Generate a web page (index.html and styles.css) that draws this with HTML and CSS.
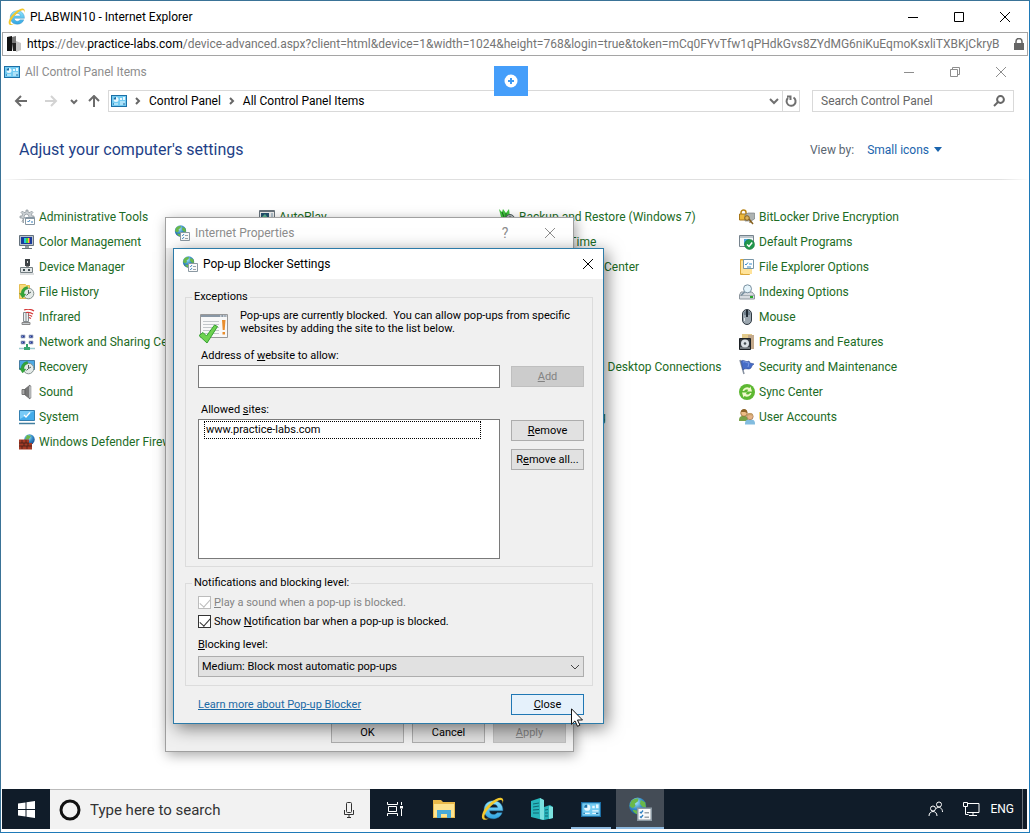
FILE: index.html
```html
<!DOCTYPE html>
<html lang="en">
  <head>
    <meta charset="utf-8">
    <title>PLABWIN10 - Internet Explorer</title>
    <link rel="stylesheet" href="styles.css">
  </head>
  <body>
    <!-- icons used more than once -->
    <svg class="sprites" aria-hidden="true">
      <defs>
        <radialGradient id="globeFill" cx="0.4" cy="0.3" r="0.8">
          <stop offset="0" stop-color="#a8e4f8"/>
          <stop offset="0.5" stop-color="#3289c4"/>
          <stop offset="1" stop-color="#173d83"/>
        </radialGradient>
        <linearGradient id="ieFill" x1="0" y1="0" x2="0" y2="1">
          <stop offset="0" stop-color="#8fe4fc"/>
          <stop offset="1" stop-color="#2fa4e2"/>
        </linearGradient>
      </defs>
      <symbol id="ie" viewBox="0 0 16 16">
        <path d="M14.600 9.200H5.600c.1 1.600 1.200 2.500 2.700 2.500 1.100 0 1.900-.4 2.400-1.200h3.400c-.9 2.500-3.100 4-5.900 4C4.600 14.500 2 12 2 8.500S4.600 2.500 8.200 2.500c3.900 0 6.600 2.700 6.400 6.700zM5.700 7h5.400c-.2-1.300-1.200-2.100-2.700-2.100S6 5.700 5.700 7z" fill="url(#ieFill)" stroke="#2c80b4" stroke-width=".3"/>
        <path d="M14.200 4.600c1-2 .9-3.600-.6-4C10.500-.1 3.300 5.300 1.200 10.300c-1.100 2.700-.7 4.700 1 4.900 1 .1 2.100-.4 3.100-1.100-3.500 1.200-3.800-1-1.800-4.200C5.900 6.200 10 2.600 12.700 2c1.500-.4 2 .8 1.500 2.600z" fill="#f2c82e"/>
      </symbol>
      <symbol id="cpanel" viewBox="0 0 16 12">
        <path d="M0 0h16v12H0z" fill="#1c6fa6"/>
        <path d="M1 1h14v10H1z" fill="#72cbf2"/>
        <circle cx="5" cy="4.500" r="2.500" fill="#e8f8ff"/>
        <path d="M5 4.500V2a2.500 2.500 0 0 0-2.500 2.500z" fill="#1c6fa6"/>
        <path d="M9 3h2v2H9zM12 2h2v3h-2z" fill="#e8f8ff"/>
        <path d="M3 9h4M9 7h5M9 9h5" stroke="#e8f8ff"/>
        <path d="M2 9h1M12 9h2" stroke="#20689c"/>
      </symbol>
      <symbol id="globe" viewBox="0 0 16 16">
        <circle cx="6.500" cy="6" r="5.700" fill="url(#globeFill)"/>
        <path d="M2 3C3.500 1.300 5.500.8 7 1.200L6.500 3 4.500 4.500 5 6 3 7.500 1 6zM8.500 2l3 1.500L12 7 9.500 6.500 8 4.500zM3 8.500l3 .5v2.500C4.500 11 3.500 10 3 8.500z" fill="#6ab84a"/>
        <path d="M6.500 7.500h9v8h-9z" fill="#fafafa" stroke="#8b98a2"/>
        <path d="M8 10l.7.700L10 9M8 13l.7.700L10 12" fill="none" stroke="#2d7fc0" stroke-width=".9"/>
        <path d="M11 10.500h3M11 13.500h3" stroke="#9aa4ac"/>
      </symbol>
      <symbol id="clockBadge" viewBox="0 0 16 16">
        <circle cx="9.500" cy="9.500" r="5.300" fill="#e4eae8" stroke="#84928f"/>
        <path d="M9.500 6v3.500L12 8M9.500 9.500l-2 2" fill="none" stroke="#52605d"/>
        <path d="M8.500 2.500C4.500 3 2 6 2.200 9.500L.500 9.300 3.600 14 7 10.200 5 10C4.800 7.300 6 5.500 8.700 5z" fill="#32a43a" stroke="#198023" stroke-width=".3"/>
      </symbol>
      <symbol id="plain" viewBox="0 0 16 16">
        <path d="M1.500 2.500h13v11h-13z" fill="#d9edf8" stroke="#5d86a3"/>
        <path d="M2 4.500h12" stroke="#5d86a3"/>
      </symbol>
    </svg>

    <div class="browser">
      <header class="browserTitle">
        <svg class="icon18"><use href="#ie"/></svg>
        <span class="browserName">PLABWIN10 - Internet Explorer</span>
        <div class="captionButtons">
          <button aria-label="Minimize"><svg viewBox="0 0 12 12"><path d="M1 6.500h10" /></svg></button>
          <button aria-label="Maximize"><svg viewBox="0 0 12 12"><path d="M1.500 1.500h9v9h-9z"/></svg></button>
          <button aria-label="Close"><svg viewBox="0 0 12 12"><path d="M1 1l10 10M11 1L1 11"/></svg></button>
        </div>
      </header>

      <div class="urlBar">
        <svg class="siteIcon" viewBox="0 0 14 16"><path d="M0 1l5-1v15H0z" fill="#111"/><path d="M5 1l4-1v7H5z" fill="#777"/><path d="M5 7h4v8H6z" fill="#222"/><path d="M9 5l5 2v7l-5 2z" fill="#c4c4c4"/></svg>
        <div class="url"><b>https</b>://dev.<b>practice-labs.com</b>/device-advanced.aspx?client=html&amp;device=1&amp;width=1024&amp;height=768&amp;login=true&amp;token=mCq0FYvTfw1qPHdkGvs8ZYdMG6niKuEqmoKsxliTXBKjCkryB</div>
        <svg class="lock" viewBox="0 0 10 13"><path d="M0 5h10v7H0z" fill="#666"/><path d="M2 6V3.500a3 3 0 0 1 6 0V6" fill="none" stroke="#666" stroke-width="1.500"/></svg>
      </div>

      <main class="desktop">
        <header class="panelTitle">
          <svg class="cpIcon"><use href="#cpanel"/></svg>
          <span>All Control Panel Items</span>
          <div class="captionButtons">
            <button aria-label="Minimize panel"><svg viewBox="0 0 12 12"><path d="M1 6.500h10"/></svg></button>
            <button aria-label="Restore panel"><svg viewBox="0 0 12 12"><path d="M1.500 3.500h7v7h-7zM3.500 3.500v-2h7v7h-2"/></svg></button>
            <button aria-label="Close panel"><svg viewBox="0 0 12 12"><path d="M1 1l10 10M11 1L1 11"/></svg></button>
          </div>
        </header>

        <nav class="navRow">
          <button class="navBack" aria-label="Back"><svg viewBox="0 0 14 12"><path d="M13 6H2M7 1L2 6l5 5"/></svg></button>
          <button class="navForward" aria-label="Forward"><svg viewBox="0 0 14 12"><path d="M1 6h11M7 1l5 5-5 5"/></svg></button>
          <button class="navRecent" aria-label="Recent locations"><svg viewBox="0 0 14 12"><path d="M4 5l3 3 3-3"/></svg></button>
          <button class="navUp" aria-label="Up"><svg viewBox="0 0 14 12"><path d="M7 12V1M2 6l5-5 5 5"/></svg></button>
          <div class="crumbs">
            <svg class="cpIcon"><use href="#cpanel"/></svg>
            <svg class="crumbArrow" viewBox="0 0 6 8"><path d="M1 1l3 3-3 3"/></svg>
            <a href="#">Control Panel</a>
            <svg class="crumbArrow" viewBox="0 0 6 8"><path d="M1 1l3 3-3 3"/></svg>
            <a href="#">All Control Panel Items</a>
            <button class="crumbDrop" aria-label="Previous locations"><svg viewBox="0 0 10 8"><path d="M1 2l4 4 4-4"/></svg></button>
            <button class="crumbRefresh" aria-label="Refresh"><svg viewBox="0 0 12 12"><path d="M8.500 2.500A4.500 4.500 0 1 1 3 3M2 1.500h3.500V5"/></svg></button>
          </div>
          <div class="searchBox">
            <input type="text" placeholder="Search Control Panel" aria-label="Search Control Panel">
            <svg viewBox="0 0 12 12"><circle cx="7.500" cy="4.500" r="3.400"/><path d="M5 7l-4 4"/></svg>
          </div>
        </nav>

        <div class="settingsHead">
          <h1>Adjust your computer's settings</h1>
          <div class="viewBy">
            <span>View by:</span>
            <button>Small icons <svg viewBox="0 0 8 5"><path d="M0 0h8L4 5z"/></svg></button>
          </div>
        </div>

        <div class="itemsGrid">
          <a href="#"><svg viewBox="0 0 16 16"><path d="M7 1h2v2l2 .600L12.500 2 14 3.500 12.500 5l.5 2H15v2H4.500v5L3 12.500l1-2L3 9H1V7h2l.500-2L2 3.500 3.500 2 5 3.600 7 3z" fill="#c9ced2" stroke="#8a9298" stroke-width=".7"/><circle cx="7.500" cy="7.500" r="2.300" fill="#fff" stroke="#8a9298" stroke-width=".7"/><path d="M6.500 8.500h9v7h-9z" fill="#fff" stroke="#8796a2"/><path d="M7 9.500h8.500" stroke="#8796a2"/><path d="M8.500 12l1 1 1.500-2M12 13h2" fill="none" stroke="#3580bd"/></svg>Administrative Tools</a>
          <a href="#"><svg viewBox="0 0 16 16"><path d="M.500 1.500h15v12H.500z" fill="#eee" stroke="#68737c"/><path d="M1 2.500h14" stroke="#68737c"/><path d="M2 4h8v7H2z" fill="#23506f"/><path d="M3 8l3-3 3 4v2H3z" fill="#5bb48f"/><path d="M12 5h2M12 7h2M12 9h2" stroke="#7695aa"/></svg>AutoPlay</a>
          <a href="#"><svg viewBox="0 0 16 16"><path d="M0 0l3 3 1-3 3 4 3-4 1 8H2z" fill="#41c23e"/><path d="M3 3l2 5M7 4v4" stroke="#187020"/><circle cx="11" cy="10" r="4.500" fill="#b0b8b8" stroke="#4d5a5c"/><path d="M11 7v3l2 1" fill="none" stroke="#444"/></svg>Backup and Restore (Windows 7)</a>
          <a href="#"><svg viewBox="0 0 16 16"><path d="M2 5V3.500a2.500 2.500 0 0 1 5 0V5" fill="none" stroke="#b88518" stroke-width="1.500"/><path d="M.500 5h8v6h-8z" fill="#edb93b" stroke="#a87718"/><path d="M6 6l3-2h6.500v6L12 12H6z" fill="#aeb3b2" stroke="#6c7475" stroke-width=".6"/><circle cx="8" cy="9" r="2.300" fill="#ddb358" stroke="#855f1d"/><path d="M10 10l4 5M12 12.500l-1.500 1" stroke="#855f1d" stroke-width="1.500"/></svg>BitLocker Drive Encryption</a>

          <a href="#"><svg viewBox="0 0 16 16"><path d="M.500 1.500h14v10H.500z" fill="#bac4cb" stroke="#65727d"/><path d="M2 3h11v7H2z" fill="#193a9b"/><path d="M5 4h2v5H5z" fill="#28c8dd"/><path d="M7 4h2v5H7z" fill="#46d643"/><path d="M9 4h1v5H9z" fill="#f3d536"/><path d="M10 4h1v5h-1z" fill="#d83c78"/><path d="M6 12h4v2H6z" fill="#90999e"/><path d="M3 14.500h10" stroke="#687379"/></svg>Color Management</a>
          <a href="#"><svg><use href="#plain"/></svg>Credential Manager</a>
          <a href="#"><svg><use href="#plain"/></svg>Date and Time</a>
          <a href="#"><svg viewBox="0 0 16 16"><path d="M.500 1.500h14v11H.500z" fill="#f5f9fb" stroke="#76838d"/><path d="M1 3h13" stroke="#8996a0"/><path d="M5 5h6l-4 6H5z" fill="#49a3da"/><circle cx="10.500" cy="10.500" r="5" fill="#21974b" stroke="#107137" stroke-width=".5"/><path d="M8 10.500l2 2 3.200-4" fill="none" stroke="#fff" stroke-width="1.500"/></svg>Default Programs</a>

          <a href="#"><svg viewBox="0 0 16 16"><path d="M6 0h5v7H6z" fill="#3e4346"/><path d="M8 2h1v2H8z" fill="#ddd"/><path d="M7 7h3v2H7z" fill="#888"/><path d="M1.500 8.500h12v5h-12z" fill="#e1e5e6" stroke="#737e82"/><path d="M4 10h2v2H4zM9 10h2v2H9z" fill="#3f4b50"/><path d="M1 15h14" stroke="#b8bdc0"/></svg>Device Manager</a>
          <a href="#"><svg><use href="#plain"/></svg>Devices and Printers</a>
          <a href="#"><svg><use href="#plain"/></svg>Ease of Access Center</a>
          <a href="#"><svg viewBox="0 0 16 16"><path d="M1.500.500h9v15h-9z" fill="#f5cf68" stroke="#dba83c"/><path d="M2 2h2v12H2zM4 10h9v5H4z" fill="#ffe39a"/><path d="M4.500.500h10v9h-10z" fill="#fff" stroke="#7795a6"/><path d="M6 5l1 1 2-2.500M10 5h3M8 8h4" fill="none" stroke="#3d8dca"/></svg>File Explorer Options</a>

          <a href="#"><svg viewBox="0 0 16 16"><path d="M.500.500h6l1 1h3v13H.500z" fill="#f8dc7a" stroke="#e5bd50"/><use href="#clockBadge"/></svg>File History</a>
          <a href="#"><svg><use href="#plain"/></svg>Flash Player</a>
          <a href="#"><svg><use href="#plain"/></svg>Fonts</a>
          <a href="#"><svg viewBox="0 0 16 16"><path d="M2 8h11l2.500 3v4H.500v-4z" fill="#d7dbe0" stroke="#8d969e"/><path d="M1 11.500h14" stroke="#a7afb5"/><path d="M11 13h3" stroke="#2aa62c" stroke-width="2"/><circle cx="8.500" cy="4.800" r="4" fill="#e5f4fb" stroke="#7b91a0"/><path d="M5.500 8L2 11.500" stroke="#7b91a0" stroke-width="1.700"/></svg>Indexing Options</a>

          <a href="#"><svg viewBox="0 0 16 16"><path d="M4.500 3.500h5v9h-5z" fill="#eceff0" stroke="#848c90"/><path d="M7 4v8" stroke="#878f92"/><path d="M3 13.500h8v2H3z" fill="#c8cdd0" stroke="#888"/><path d="M5 1c3-1 7-1 10 1M7 3.500c3-.500 5 0 7 1.500M9 6c2 0 3 .500 4 1.500M10 8.500l2 1" fill="none" stroke="#d53b3b" stroke-width="1.200"/></svg>Infrared</a>
          <a href="#"><svg><use href="#plain"/></svg>Internet Options</a>
          <a href="#"><svg><use href="#plain"/></svg>Keyboard</a>
          <a href="#"><svg viewBox="0 0 16 16"><rect x="3.500" y=".5" width="9" height="15" rx="4.500" fill="#9ba6af" stroke="#303a43"/><path d="M5 3c1-1.500 5-1.500 6 0v3H5z" fill="#6f7f8c"/><path d="M8 1v7" stroke="#202a33" stroke-width="2"/><path d="M5.500 9v3" stroke="#e0e5e8"/></svg>Mouse</a>

          <a href="#"><svg viewBox="0 0 16 16"><path d="M2 1h4v3H2zM10 1h4v3h-4zM2 7h4v3H2zM10 7h4v3h-4z" fill="#26368c" stroke="#a9b6c7" stroke-width=".8"/><path d="M3 2h1v1H3zM11 2h1v1h-1zM3 8h1v1H3zM11 8h1v1h-1z" fill="#7192e2"/><path d="M8 10v4" stroke="#34a069" stroke-width="2"/><path d="M0 14.500h16" stroke="#9ccbd0" stroke-width="1.500"/><path d="M5 13h6v3H5z" fill="#39a673"/></svg>Network and Sharing Center</a>
          <a href="#"><svg><use href="#plain"/></svg>Phone and Modem</a>
          <a href="#"><svg><use href="#plain"/></svg>Power Options</a>
          <a href="#"><svg viewBox="0 0 16 16"><path d="M3 0h10v4H3z" fill="#e3cb8c"/><path d="M9 1h6v14H9z" fill="#c3a98b"/><path d="M.500 4.500h11v11H.500z" fill="#373d42" stroke="#1d2226"/><circle cx="6" cy="9.500" r="4" fill="#dce3e7"/><circle cx="6" cy="9.500" r="1.300" fill="#454e53"/><path d="M1 14h10" stroke="#adb5b9"/></svg>Programs and Features</a>

          <a href="#"><svg viewBox="0 0 16 16"><path d="M.500 1.500h15v9H.500z" fill="#4daae5" stroke="#477da3"/><use href="#clockBadge"/></svg>Recovery</a>
          <a href="#"><svg><use href="#plain"/></svg>Region</a>
          <a href="#"><svg><use href="#plain"/></svg>RemoteApp and Desktop Connections</a>
          <a href="#"><svg viewBox="0 0 16 16"><path d="M1 1l4 14" stroke="#8690a0" stroke-width="1.500"/><path d="M2 2c3-2 5 2 8 0l1 2 4 1c-3 1-2 5-5 5-2 0-4-1-6 1z" fill="#466cc7" stroke="#294594" stroke-width=".6"/><path d="M4 3c2-1 4 1 6 1l-1 4" fill="none" stroke="#7d9ce4"/></svg>Security and Maintenance</a>

          <a href="#"><svg viewBox="0 0 16 16"><path d="M3 5.500h3v5H3z" fill="#aaa" stroke="#777"/><path d="M6 5l5-4v14l-5-4z" fill="#777" stroke="#555" stroke-width=".6"/><path d="M10 2h2v12h-2z" fill="#c5c8ca" stroke="#777" stroke-width=".5"/></svg>Sound</a>
          <a href="#"><svg><use href="#plain"/></svg>Speech Recognition</a>
          <a href="#"><svg><use href="#plain"/></svg>Storage Spaces</a>
          <a href="#"><svg viewBox="0 0 16 16"><circle cx="8" cy="8" r="8" fill="#5db832"/><path d="M3.500 7a4.700 4.700 0 0 1 7-3l1-1.500 1.500 5H8l1.300-1.600C7.500 5 6 5.500 5 7zM12.500 9a4.700 4.700 0 0 1-7 3l-1 1.500-1.500-5h5l-1.300 1.600C8.500 11 10 10.500 11 9z" fill="#f0f9cd"/></svg>Sync Center</a>

          <a href="#"><svg viewBox="0 0 16 16"><path d="M.500 1.500h15v10H.500z" fill="#43aceb" stroke="#347fb0"/><path d="M1 2h14L1 10z" fill="#78cbf8"/><path d="M5 6l2 2 4-4.500" fill="none" stroke="#fff" stroke-width="1.300"/><path d="M0 14.500h16" stroke="#427e9f" stroke-width="1.500"/></svg>System</a>
          <a href="#"><svg><use href="#plain"/></svg>Taskbar and Navigation</a>
          <a href="#"><svg><use href="#plain"/></svg>Troubleshooting</a>
          <a href="#"><svg viewBox="0 0 16 16"><path d="M0 12c0-5 2-5 5-5s4 1 4 5z" fill="#77a246"/><circle cx="5" cy="4" r="3.300" fill="#edbd86" stroke="#8a622b" stroke-width=".7"/><path d="M2 3c0-4 7-4 6 1L6 3z" fill="#8c6328"/><path d="M6 15.500c0-4 1-5 5-5s5 1 5 5z" fill="#82bcdf"/><circle cx="11" cy="7.500" r="3.200" fill="#e5b387" stroke="#926742" stroke-width=".6"/><path d="M8 7c0-4 6-4 6 0l-3-1z" fill="#c9a168"/></svg>User Accounts</a>

          <a href="#"><svg viewBox="0 0 16 16"><circle cx="10.500" cy="5.500" r="5.200" fill="url(#globeFill)"/><path d="M8 1l4 1-2 3-4 1z" fill="#6ab84a"/><path d="M0 5.500h10V9h3v6.500H0z" fill="#a63a25"/><path d="M0 9h10M0 12h13M3 6v3M7 6v3M5 9v3M9 9v3M3 12v3M8 12v3" stroke="#41221b" stroke-width=".8"/></svg>Windows Defender Firewall</a>
          <a href="#"><svg><use href="#plain"/></svg>Work Folders</a>
        </div>

        <button class="toolbarToggle" aria-label="Show toolbar"><svg viewBox="0 0 14 14"><circle cx="7" cy="7" r="6.500" fill="#fff"/><path d="M7 4v6M4 7h6" stroke="#409bf2" stroke-width="2"/></svg></button>

        <section class="dialog internetDialog" aria-label="Internet Properties">
          <header class="dialogTitle">
            <svg class="icon16"><use href="#globe"/></svg>
            <span>Internet Properties</span>
            <button class="helpButton" aria-label="Help">?</button>
            <button aria-label="Close Internet Properties"><svg viewBox="0 0 12 12"><path d="M1 1l10 10M11 1L1 11"/></svg></button>
          </header>
          <div class="internetButtons">
            <button class="dlgButton">OK</button>
            <button class="dlgButton">Cancel</button>
            <button class="dlgButton" disabled><u>A</u>pply</button>
          </div>
        </section>

        <section class="dialog popupDialog" aria-label="Pop-up Blocker Settings">
          <header class="dialogTitle">
            <svg class="icon16"><use href="#globe"/></svg>
            <span>Pop-up Blocker Settings</span>
            <button aria-label="Close window"><svg viewBox="0 0 12 12"><path d="M1 1l10 10M11 1L1 11"/></svg></button>
          </header>
          <div class="dialogBody">
            <fieldset class="exceptions">
              <legend>Exceptions</legend>
              <div class="intro">
                <svg viewBox="0 0 32 32"><path d="M2.500 2.500h27v23h-27z" fill="#f8f8f8" stroke="#999"/><path d="M3 3h26v2H3z" fill="#8997a5"/><path d="M22 4h1.500M25 4h1.500M27.500 4H29" stroke="#fff"/><path d="M5 9.500h16M5 12.500h16M5 15.500h16M5 18.500h16M5 21.500h16" stroke="#c3c7ca"/><path d="M24 8h3.500l-.8 10h-2zM24.500 20h2.500v2.500h-2.500z" fill="#e98d2c"/><path d="M1 23.500l4-3 3.500 3.500L16.500 13l3 1.500L9 31z" fill="#6ed250" stroke="#35a131"/></svg>
                <p>Pop-ups are currently blocked.&nbsp; You can allow pop-ups from specific websites by adding the site to the list below.</p>
              </div>
              <label class="rowLabel" for="site">Address of <u>w</u>ebsite to allow:</label>
              <div class="fieldRow">
                <input type="text" id="site">
                <button class="dlgButton" disabled><u>A</u>dd</button>
              </div>
              <label class="rowLabel" for="allowed">Allowed <u>s</u>ites:</label>
              <div class="fieldRow">
                <select id="allowed" size="8">
                  <option>www.practice-labs.com</option>
                </select>
                <div class="sideButtons">
                  <button class="dlgButton"><u>R</u>emove</button>
                  <button class="dlgButton">R<u>e</u>move all...</button>
                </div>
              </div>
            </fieldset>

            <fieldset class="notifications">
              <legend>Notifications and blocking level:</legend>
              <label class="check disabled"><input type="checkbox" checked disabled><span><u>P</u>lay a sound when a pop-up is blocked.</span></label>
              <label class="check"><input type="checkbox" checked><span>Show <u>N</u>otification bar when a pop-up is blocked.</span></label>
              <label class="levelLabel" for="level"><u>B</u>locking level:</label>
              <div class="levelSelect">
                <select id="level">
                  <option>Medium: Block most automatic pop-ups</option>
                </select>
                <svg viewBox="0 0 10 6"><path d="M1 1l4 4 4-4"/></svg>
              </div>
            </fieldset>

            <footer class="dialogFooter">
              <a href="#">Learn more about Pop-up Blocker</a>
              <button class="dlgButton closeButton"><u>C</u>lose</button>
            </footer>
          </div>
        </section>

        <svg class="pointer" viewBox="0 0 12 19"><path d="M.500.800v15.500l3.500-3.400 2.500 5.400 2.400-1.100-2.400-5.200h5z" fill="#fff" stroke="#111"/></svg>
      </main>

      <footer class="taskbar">
        <button class="startButton" aria-label="Start"><svg viewBox="0 0 17 17"><path d="M0 2.500L7.500 1.400V8H0zM8.500 1.300L17 0v8H8.500zM0 9h7.500v6.600L0 14.500zM8.500 9H17v8l-8.500-1.200z" fill="#fff"/></svg></button>
        <div class="taskSearch">
          <svg class="cortana" viewBox="0 0 24 24"><circle cx="12" cy="12" r="9"/></svg>
          <input type="text" placeholder="Type here to search" aria-label="Type here to search">
          <svg class="mic" viewBox="0 0 12 18"><rect x="3.500" y="1.500" width="5" height="10" rx="1"/><path d="M1.500 9v4.500h9V9M6 13.500V17M4 16.500h4"/></svg>
        </div>
        <div class="taskButtons">
          <button aria-label="Task View"><svg width="18" height="18" viewBox="0 0 18 18" fill="none" stroke="#fff"><path d="M1.500 2v2.500h10V2M1.500 16v-2.500h10V16M2.500 6.500h8v5h-8zM15.500 2v3M15.500 9v7"/><path d="M14 6h3v2.500h-3z" fill="#fff" stroke="none"/></svg></button>
          <button aria-label="File Explorer"><svg width="22" height="20" viewBox="0 0 22 20"><path d="M0 1h8l2 2h12v16H0z" fill="#e9b94a"/><path d="M1 5h20v13H1z" fill="#fde38f"/><path d="M4 19v-8h14v8h-4v-4H8v4z" fill="#48a9d8"/></svg></button>
          <button aria-label="Internet Explorer"><svg width="24" height="24"><use href="#ie"/></svg></button>
          <button aria-label="Server Manager"><svg width="22" height="22" viewBox="0 0 22 22"><path d="M0 3l9-3 3 2v20L0 19z" fill="#28b7bd"/><path d="M9 0l4 2v20l-4-1z" fill="#7ae0df"/><path d="M13 9l6-2 3 2v11l-9 2z" fill="#27b1b8"/><path d="M18 8l4 1v11l-4 1z" fill="#7be2df"/><path d="M2 6l6-1M2 9l6-1M2 12l6-.500M2 15h6M14 12l3-.500M14 15h3M14 18h3" stroke="#0e6673"/></svg></button>
          <button class="running" aria-label="Control Panel"><svg width="20" height="15"><use href="#cpanel"/></svg></button>
          <button class="running active" aria-label="Internet Properties"><svg width="24" height="24"><use href="#globe"/></svg></button>
        </div>
        <div class="tray">
          <svg width="16" height="16" viewBox="0 0 16 16"><circle cx="5" cy="7.500" r="2.500"/><path d="M1 15c0-6 8-6 8 0"/><circle cx="11" cy="3.500" r="2.500"/><path d="M8 7.500c3-2.500 6.500-.500 6.500 3.500"/></svg>
          <svg width="18" height="16" viewBox="0 0 18 16"><path d="M5 2.500h12v9H5M11 11.500v3M7 14.500h8"/><path d="M1.500 1.500h4v4h-4zM3.500 5.500v8h3"/></svg>
          <span>ENG</span>
        </div>
      </footer>
    </div>
  </body>
</html>
```
FILE: styles.css
```css
* {
  box-sizing: border-box;
}

body {
  margin: 0;
  font-family: Roboto, "Open Sans", sans-serif;
  font-size: 12px;
  color: #000;
  background-color: #fff;
}

button, input, select {
  font: inherit;
  color: inherit;
}

button {
  padding: 0;
  border: none;
  background: none;
}

a {
  text-decoration: none;
}

.sprites {
  position: absolute;
  width: 0;
  height: 0;
}

/* browser window */
.browser {
  min-height: 100vh;
  display: flex;
  flex-direction: column;
  padding: 0 1px 3px;
  border: 1px solid #1f7ab8;
  border-top-color: #3a7397;
  border-left-color: #3a7397;
  overflow: hidden;
}

.browserTitle {
  height: 31px;
  display: flex;
  align-items: center;
  padding-left: 6px;
}

.icon18 {
  width: 18px;
  height: 18px;
}

.icon16 {
  width: 16px;
  height: 16px;
}

.browserName {
  margin-left: 4px;
}

.captionButtons {
  display: flex;
  margin-left: auto;
}

.captionButtons button {
  width: 46px;
  height: 28px;
  display: flex;
  justify-content: center;
  align-items: center;
}

.captionButtons svg, .dialogTitle button svg {
  width: 12px;
  height: 12px;
  fill: none;
  stroke: currentColor;
}

.urlBar {
  height: 24px;
  display: flex;
  align-items: center;
  padding: 0 3px 0 4px;
  border: 1px solid #a5a5a5;
}

.siteIcon {
  width: 14px;
  height: 16px;
  flex: none;
}

.url {
  flex: 1;
  margin: 0 6px;
  overflow: hidden;
  white-space: nowrap;
  color: #757575;
}

.url b {
  font-weight: normal;
  color: #000;
}

.lock {
  width: 10px;
  height: 13px;
  flex: none;
}

/* control panel */
.desktop {
  flex: 1;
  position: relative;
}

.panelTitle {
  height: 32px;
  display: flex;
  align-items: center;
  gap: 5px;
  padding: 0 4px 0 2px;
  color: #8d8d8d;
}

.cpIcon {
  width: 16px;
  height: 12px;
  flex: none;
}

.navRow {
  height: 22px;
  display: flex;
  margin-top: 2px;
  padding: 0 14px 0 6px;
}

.navRow > button {
  display: flex;
  justify-content: center;
  align-items: center;
  color: #6b6b6b;
}

.navRow > button svg {
  width: 14px;
  height: 12px;
  flex: none;
  fill: none;
  stroke: currentColor;
  stroke-width: 2;
}

.navRow .navBack {
  width: 26px;
}

.navRow .navForward {
  width: 34px;
  color: #d3d3d3;
}

.navRow .navRecent {
  width: 12px;
}

.navRow .navUp {
  width: 28px;
}

.crumbs {
  flex: 1;
  display: flex;
  align-items: center;
  padding-left: 2px;
  border: 1px solid #d9d9d9;
}

.crumbs a {
  color: #000;
}

.crumbArrow {
  width: 6px;
  height: 8px;
  margin: 0 8px;
  fill: none;
  stroke: #666;
  stroke-width: 2;
}

.crumbDrop, .crumbRefresh {
  height: 20px;
  display: flex;
  justify-content: center;
  align-items: center;
}

.crumbDrop {
  width: 16px;
  margin-left: auto;
}

.crumbRefresh {
  width: 17px;
  border-left: 1px solid #d9d9d9;
}

.crumbs button svg {
  width: 10px;
  height: 10px;
  fill: none;
  stroke: #707070;
  stroke-width: 2;
}

.crumbs .crumbRefresh svg {
  width: 12px;
  height: 12px;
}

.searchBox {
  width: 202px;
  display: flex;
  align-items: center;
  margin-left: 12px;
  padding: 0 8px;
  border: 1px solid #d9d9d9;
}

.searchBox input {
  flex: 1;
  min-width: 0;
  padding: 0;
  border: none;
  outline: none;
}

.searchBox input::placeholder {
  color: #666;
}

.searchBox svg {
  width: 12px;
  height: 12px;
  fill: none;
  stroke: #666;
  stroke-width: 2;
}

.settingsHead {
  height: 68px;
  display: flex;
  align-items: center;
  padding: 8px 86px 0 17px;
  border-bottom: 1px solid;
  border-image: linear-gradient(to right, #fff, #dfdfdf 3%, #dfdfdf 97%, #fff) 1;
}

.settingsHead h1 {
  margin: 0;
  font-size: 16px;
  font-weight: normal;
  color: #1e3f87;
}

.viewBy {
  display: flex;
  gap: 13px;
  margin-left: auto;
  color: #5a6672;
}

.viewBy button {
  display: flex;
  align-items: center;
  gap: 5px;
  color: #1a64ad;
}

.viewBy svg {
  width: 8px;
  height: 5px;
  fill: #1a64ad;
}

.itemsGrid {
  display: grid;
  grid-template-columns: repeat(4, 240px);
  grid-auto-rows: 25px;
  padding: 24px 0 0 17px;
}

.itemsGrid a {
  display: flex;
  align-items: center;
  gap: 4px;
  white-space: nowrap;
  color: #1c6b25;
}

.itemsGrid svg {
  width: 16px;
  height: 16px;
  flex: none;
}

.toolbarToggle {
  position: absolute;
  top: 10px;
  left: 492px;
  width: 34px;
  height: 30px;
  display: flex;
  justify-content: center;
  align-items: center;
  background-color: #459efa;
}

.toolbarToggle svg {
  width: 14px;
  height: 14px;
}

/* dialogs */
.dialog {
  position: absolute;
  display: flex;
  flex-direction: column;
  background-color: #f0f0f0;
}

.internetDialog {
  top: 161px;
  left: 163px;
  width: 409px;
  height: 535px;
  border: 1px solid #a0a0a0;
  box-shadow: 2px 3px 12px rgba(0, 0, 0, 0.35);
}

.popupDialog {
  top: 192px;
  left: 171px;
  width: 431px;
  border: 1px solid #2c7ba9;
  box-shadow: 3px 4px 16px rgba(0, 0, 0, 0.5);
}

.dialogTitle {
  height: 30px;
  display: flex;
  align-items: center;
  padding: 0 0 0 8px;
  background-color: #fff;
}

.dialogTitle span {
  margin: 0 auto 0 5px;
}

.dialogTitle button {
  width: 30px;
  height: 28px;
  display: flex;
  justify-content: center;
  align-items: center;
}

.internetDialog .dialogTitle {
  padding-right: 8px;
  color: #8d8d8d;
}

.internetDialog .helpButton {
  margin-right: 15px;
  font-size: 14px;
}

.dlgButton {
  width: 73px;
  height: 21px;
  flex: none;
  font-size: 11px;
  border: 1px solid #adadad;
  background-color: #e1e1e1;
}

.dlgButton:disabled {
  color: #838383;
  border-color: #bfbfbf;
  background-color: #ccc;
}

.internetButtons {
  display: flex;
  justify-content: flex-end;
  gap: 8px;
  margin-top: auto;
  padding: 0 7px 8px;
}

.dialogBody {
  padding: 11px 10px 8px 11px;
  font-size: 11px;
  line-height: 14px;
}

fieldset {
  margin: 0;
  padding: 8px 8px 7px 12px;
  border: 1px solid #dcdcdc;
}

legend {
  margin-left: -6px;
  padding: 0 2px;
}

.intro {
  display: flex;
  gap: 10px;
  margin-bottom: 5px;
}

.intro svg {
  width: 32px;
  height: 32px;
  flex: none;
}

.intro p {
  margin: -3px 0 0;
  line-height: 13px;
}

.rowLabel {
  display: block;
  margin: 3px 0 2px 3px;
}

.fieldRow {
  display: flex;
  gap: 11px;
}

.fieldRow input, #allowed {
  flex: 1;
  min-width: 0;
  border: 1px solid #7a7a7a;
  border-radius: 0;
  background-color: #fff;
}

.fieldRow input {
  height: 23px;
}

.fieldRow > .dlgButton {
  margin-top: 1px;
}

.fieldRow + .rowLabel {
  margin-top: 15px;
}

#allowed {
  height: 140px;
  padding: 1px 18px 0 5px;
  outline: none;
}

#allowed option {
  min-height: 18px;
  padding: 1px;
  border: 1px dotted #000;
}

.sideButtons {
  display: flex;
  flex-direction: column;
  gap: 8px;
  padding-top: 1px;
}

.notifications {
  margin-top: 9px;
  padding: 3px 8px 8px 12px;
}

.check {
  height: 19px;
  display: flex;
  align-items: center;
  gap: 3px;
}

.check.disabled {
  color: #838383;
}

.check input {
  appearance: none;
  width: 13px;
  height: 13px;
  display: flex;
  justify-content: center;
  margin: 0;
  border: 1px solid #333;
  background-color: #fff;
}

.check input::after {
  content: "";
  width: 5px;
  height: 9px;
  border: solid #333;
  border-width: 0 1px 1px 0;
  transform: rotate(42deg);
}

.check input:disabled, .check input:disabled::after {
  border-color: #bcbcbc;
}

.levelLabel {
  display: block;
  margin: 7px 0 4px;
}

.levelSelect {
  position: relative;
}

.levelSelect select {
  appearance: none;
  display: block;
  width: 100%;
  height: 21px;
  padding: 0 24px 0 3px;
  border: 1px solid #adadad;
  border-radius: 0;
  background-color: #e1e1e1;
}

.levelSelect svg {
  position: absolute;
  top: 8px;
  right: 4px;
  width: 10px;
  height: 6px;
  fill: none;
  stroke: #444;
}

.dialogFooter {
  display: flex;
  justify-content: space-between;
  align-items: center;
  margin-top: 8px;
  padding: 0 9px 0 13px;
}

.dialogFooter a {
  text-decoration: underline;
  color: #1a69a5;
}

.closeButton {
  border-color: #1f77b4;
  background-color: #e5f1fb;
}

.pointer {
  position: absolute;
  top: 652px;
  left: 569px;
  width: 12px;
  height: 19px;
}

/* taskbar */
.taskbar {
  height: 40px;
  display: flex;
  margin-right: 1px;
  color: #fff;
  background-color: #101c29;
}

.startButton {
  width: 48px;
}

.startButton svg {
  width: 17px;
  height: 17px;
  vertical-align: middle;
}

.taskSearch {
  width: 320px;
  display: flex;
  align-items: center;
  padding: 0 15px 0 8px;
  border-top: 1px solid #bbb;
  background-color: #f2f2f2;
}

.taskSearch svg {
  flex: none;
  fill: none;
  stroke: #333;
}

.taskSearch .cortana {
  width: 24px;
  height: 24px;
  stroke: #111;
  stroke-width: 3;
}

.taskSearch .mic {
  width: 12px;
  height: 18px;
}

.taskSearch input {
  flex: 1;
  min-width: 0;
  padding: 0 0 0 8px;
  border: none;
  outline: none;
  background: none;
  font-size: 15px;
  color: #333;
}

.taskSearch input::placeholder {
  color: #333;
}

.taskButtons {
  display: flex;
  gap: 1px;
  padding-left: 1px;
}

.taskButtons button {
  width: 48px;
  height: 40px;
  display: flex;
  justify-content: center;
  align-items: center;
}

.taskButtons .running {
  background: linear-gradient(#8db9df, #8db9df) bottom / 40px 2px no-repeat;
}

.taskButtons .active {
  background-color: #444c56;
  background-size: 48px 2px;
}

.tray {
  display: flex;
  align-items: center;
  gap: 18px;
  margin: 0 4px 0 auto;
  padding-right: 8px;
  border-right: 1px solid #6b747d;
}

.tray svg {
  fill: none;
  stroke: #fff;
}

.tray span {
  margin-left: -8px;
}
```
